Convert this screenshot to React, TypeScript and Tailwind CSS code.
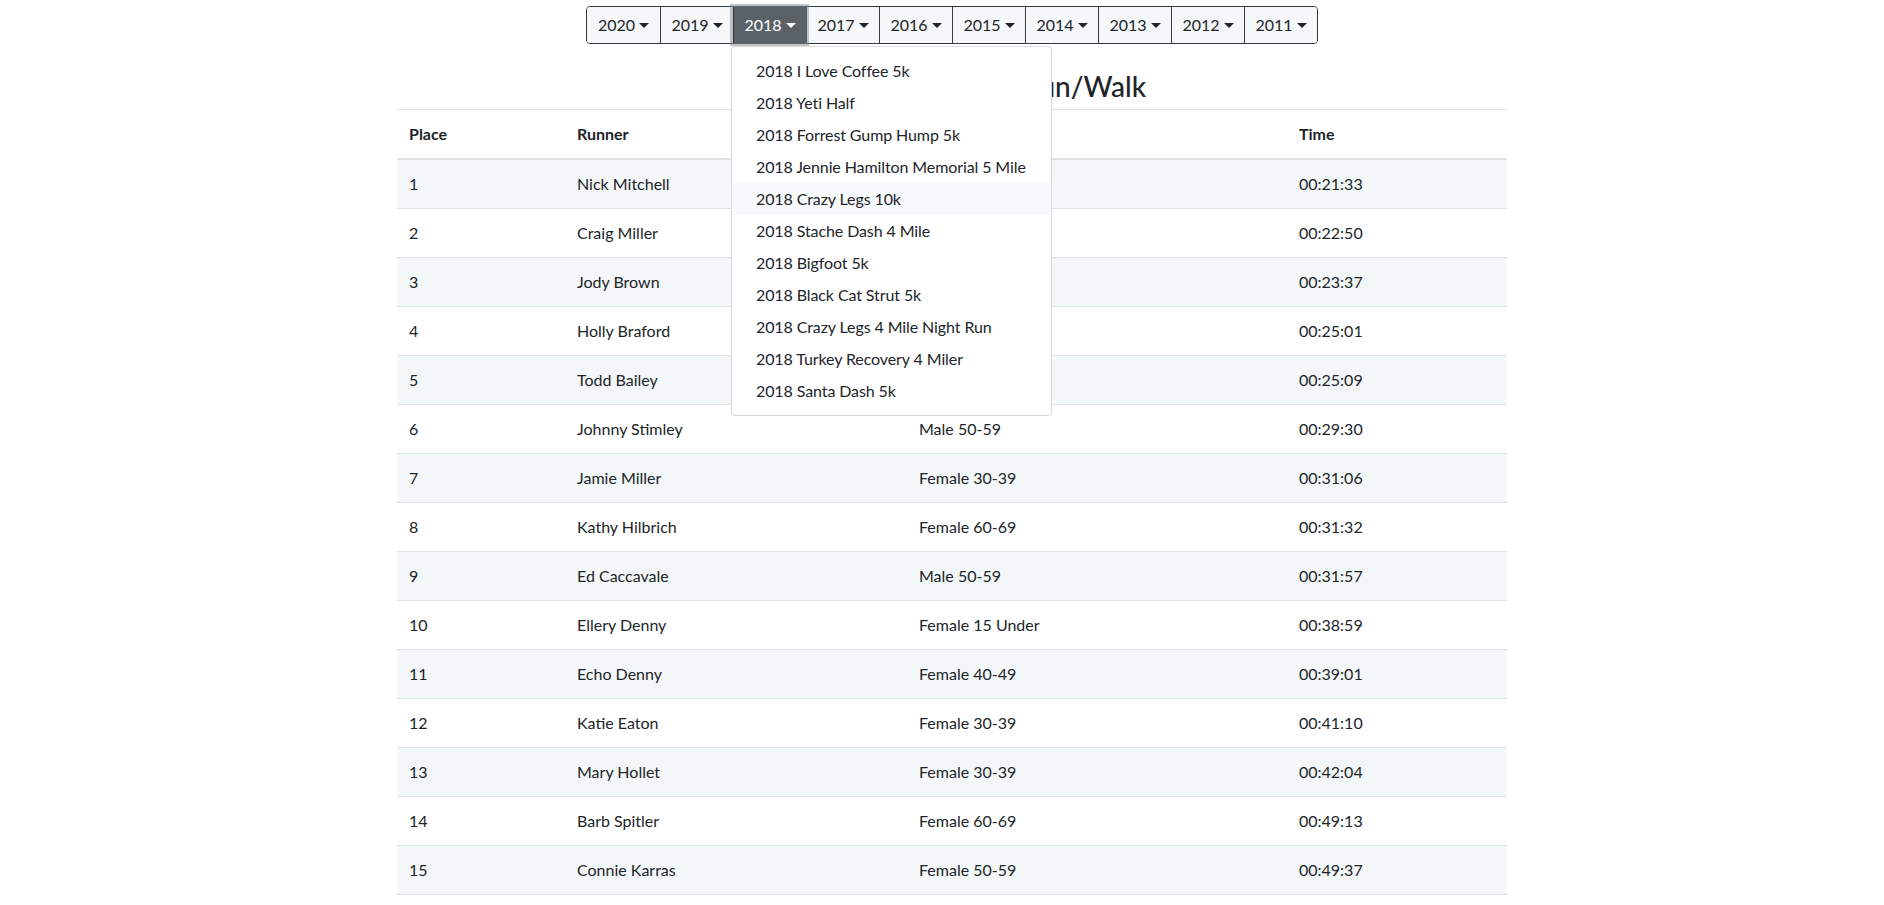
import React from 'react'

const years = ['2020', '2019', '2018', '2017', '2016', '2015', '2014', '2013', '2012', '2011']

const races = [
  '2018 I Love Coffee 5k',
  '2018 Yeti Half',
  '2018 Forrest Gump Hump 5k',
  '2018 Jennie Hamilton Memorial 5 Mile',
  '2018 Crazy Legs 10k',
  '2018 Stache Dash 4 Mile',
  '2018 Bigfoot 5k',
  '2018 Black Cat Strut 5k',
  '2018 Crazy Legs 4 Mile Night Run',
  '2018 Turkey Recovery 4 Miler',
  '2018 Santa Dash 5k',
]

const results = [
  ['1', 'Nick Mitchell', 'Male 30-39', '00:21:33'],
  ['2', 'Craig Miller', 'Male 40-49', '00:22:50'],
  ['3', 'Jody Brown', 'Male 50-59', '00:23:37'],
  ['4', 'Holly Braford', 'Female 30-39', '00:25:01'],
  ['5', 'Todd Bailey', 'Male 40-49', '00:25:09'],
  ['6', 'Johnny Stimley', 'Male 50-59', '00:29:30'],
  ['7', 'Jamie Miller', 'Female 30-39', '00:31:06'],
  ['8', 'Kathy Hilbrich', 'Female 60-69', '00:31:32'],
  ['9', 'Ed Caccavale', 'Male 50-59', '00:31:57'],
  ['10', 'Ellery Denny', 'Female 15 Under', '00:38:59'],
  ['11', 'Echo Denny', 'Female 40-49', '00:39:01'],
  ['12', 'Katie Eaton', 'Female 30-39', '00:41:10'],
  ['13', 'Mary Hollet', 'Female 30-39', '00:42:04'],
  ['14', 'Barb Spitler', 'Female 60-69', '00:49:13'],
  ['15', 'Connie Karras', 'Female 50-59', '00:49:37'],
]

function Caret({ light }: { light?: boolean }) {
  return (
    <span
      className={
        'ml-[4px] inline-block h-0 w-0 border-x-[5px] border-t-[5px] border-x-transparent align-[3px] ' +
        (light ? 'border-t-white' : 'border-t-[#212529]')
      }
    />
  )
}

export default function App() {
  return (
    <div className="min-h-screen bg-white font-['Lato',sans-serif] text-[16px] text-[#212529]">
      <div className="pl-[20px]">
        {/* Year picker */}
        <div className="relative flex justify-center pt-[6px]">
          <div className="flex rounded-[4px] border border-[#343a40]">
            {years.map((y, i) => {
              const active = y === '2018'
              return (
                <button
                  key={y}
                  className={
                    'flex h-[36px] w-[73px] items-center justify-center leading-6 ' +
                    (i > 0 ? 'border-l border-[#343a40] ' : '') +
                    (i === 0 ? 'rounded-l-[3px] ' : '') +
                    (i === years.length - 1 ? 'rounded-r-[3px] ' : '') +
                    (active
                      ? 'relative z-10 bg-[#5a6268] text-white shadow-[0_0_0_3px_rgba(130,138,145,0.5)]'
                      : 'bg-[#f5f7f8] text-[#212529]')
                  }
                >
                  {y}
                  <Caret light={active} />
                </button>
              )
            })}
          </div>

          {/* Open dropdown for 2018 */}
          <div className="absolute left-[711px] top-[46px] z-20 w-[321px] rounded-[4px] border border-[rgba(0,0,0,0.15)] bg-white py-2">
            {races.map((r) => (
              <div
                key={r}
                className={
                  'whitespace-nowrap px-6 py-1 leading-6 tracking-[-0.1px] text-[#212529] ' +
                  (r === '2018 Crazy Legs 10k' ? 'bg-[#f8f9fa]' : '')
                }
              >
                {r}
              </div>
            ))}
          </div>
        </div>

        <div className="mx-auto w-[1110px]">
          <h3 className="mt-[25px] mb-[6px] text-center text-[28px] font-medium leading-[34px] text-[#212529]">
            2018 Crazy Legs 10k Run/Walk
          </h3>

          <table className="w-full table-fixed border-collapse">
            <colgroup>
              <col className="w-[168px]" />
              <col className="w-[342px]" />
              <col className="w-[380px]" />
              <col className="w-[220px]" />
            </colgroup>
            <thead>
              <tr className="border-t border-[#dee2e6]">
                <th className="border-b-2 border-[#dee2e6] px-3 py-3 text-left font-bold leading-6">Place</th>
                <th className="border-b-2 border-[#dee2e6] px-3 py-3 text-left font-bold leading-6">Runner</th>
                <th className="border-b-2 border-[#dee2e6] px-3 py-3 text-left font-bold leading-6">Category</th>
                <th className="border-b-2 border-[#dee2e6] px-3 py-3 text-left font-bold leading-6">Time</th>
              </tr>
            </thead>
            <tbody>
              {results.map((row, i) => (
                <tr key={row[0]} className={i % 2 === 0 ? 'bg-[#f4f7f8]' : 'bg-white'}>
                  {row.map((cell, j) => (
                    <td key={j} className="border-b border-[#dee2e6] px-3 py-3 leading-6">
                      {cell}
                    </td>
                  ))}
                </tr>
              ))}
            </tbody>
          </table>
        </div>
      </div>
    </div>
  )
}
